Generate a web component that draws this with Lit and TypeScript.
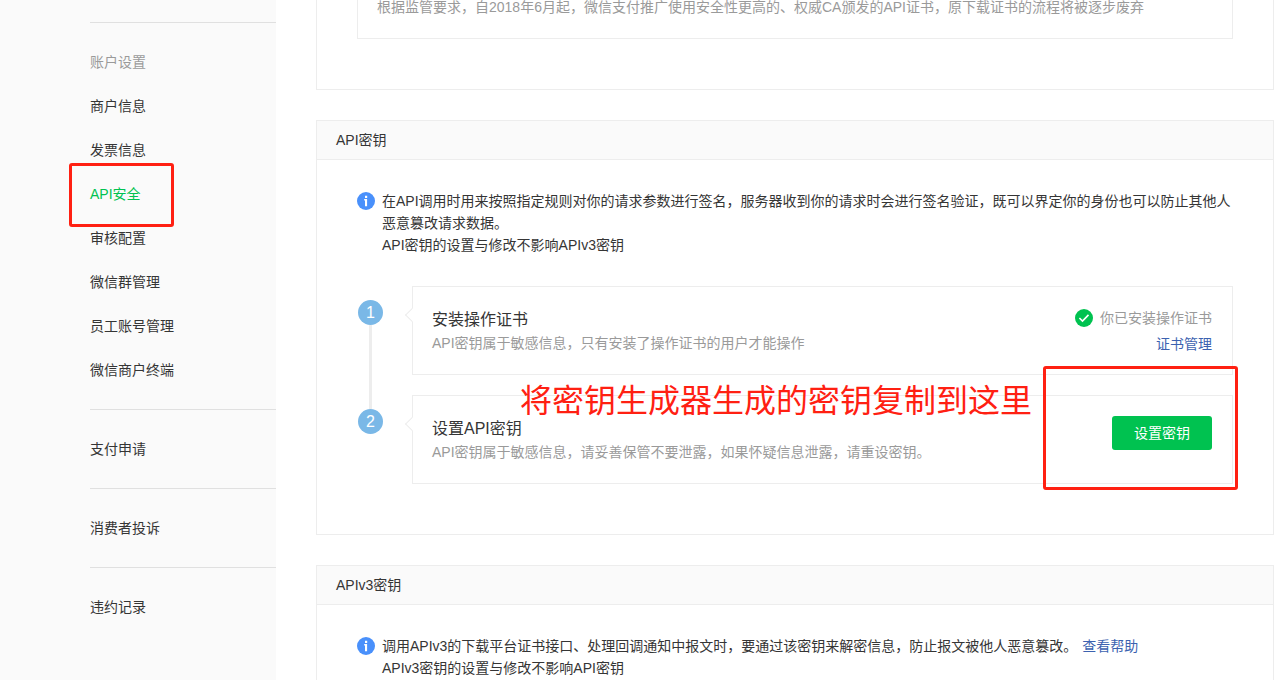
import { LitElement, html, css, svg, nothing } from "lit";
import { customElement, property } from "lit/decorators.js";

const fontStack = css`"Liberation Sans", "Noto Sans CJK SC", sans-serif`;

const infoIcon = html`<svg class="icon" viewBox="0 0 18 18" width="18" height="18" aria-hidden="true">
  <circle cx="9" cy="9" r="9" fill="#4990fb"></circle>
  ${svg`<path d="M8 3.8h2.2v2.2H8zM7.2 7H10.1V14.2H8V8.4H7.2z" fill="#fff"></path>`}
</svg>`;

const checkIcon = html`<svg class="icon" viewBox="0 0 18 18" width="18" height="18" aria-hidden="true">
  <circle cx="9" cy="9" r="9" fill="#00c250"></circle>
  ${svg`<path d="M4.4 9l3.1 3.1 6-6.2" fill="none" stroke="#fff" stroke-width="1.6"></path>`}
</svg>`;

interface MenuGroup {
  title?: string;
  items: string[];
}

const menu: MenuGroup[] = [
  {
    title: "账户设置",
    items: ["商户信息", "发票信息", "API安全", "审核配置", "微信群管理", "员工账号管理", "微信商户终端"],
  },
  { items: ["支付申请"] },
  { items: ["消费者投诉"] },
  { items: ["违约记录"] },
];

@customElement("side-menu")
export class SideMenu extends LitElement {
  @property() active = "";

  static styles = css`
    :host {
      display: block;
      box-sizing: border-box;
      padding: 22px 0 0 90px;
      background: #fafafa;
    }
    .group {
      margin: 0;
      padding: 17px 0;
      border-top: 1px solid #e0e0e0;
      list-style: none;
      font-size: 14px;
      line-height: 44px;
    }
    .title {
      color: #9a9a9a;
    }
    .item {
      position: relative;
    }
    .link {
      color: #353535;
      text-decoration: none;
    }
    .current {
      color: #00c250;
    }
    .mark {
      position: absolute;
      left: -21px;
      top: -9px;
      box-sizing: border-box;
      width: 105px;
      height: 64px;
      border: 3px solid #ff2012;
      border-radius: 3px;
      pointer-events: none;
      z-index: 1;
    }
  `;

  render() {
    return html`<nav>
      ${menu.map(
        (group) => html`<ul class="group">
          ${group.title ? html`<li class="title">${group.title}</li>` : nothing}
          ${group.items.map(
            (name) => html`<li class="item">
              <a class="link ${name === this.active ? "current" : ""}" href="#">${name}</a>
              ${name === this.active ? html`<span class="mark"></span>` : nothing}
            </li>`
          )}
        </ul>`
      )}
    </nav>`;
  }
}

@customElement("app-root")
export class AppRoot extends LitElement {
  static styles = css`
    :host {
      display: grid;
      grid-template-columns: 276px minmax(0, 1fr);
      height: 100vh;
      overflow: hidden;
      background: #fff;
      color: #353535;
      font-family: ${fontStack};
      font-size: 14px;
      line-height: 22px;
    }
    .main {
      display: flex;
      flex-direction: column;
      gap: 30px;
      margin: -4px 3px 0 40px;
    }
    .panel {
      border: 1px solid #ededed;
    }
    .panel.continued {
      border-top: 0;
    }
    .heading {
      margin: 0;
      padding: 0 19px;
      border-bottom: 1px solid #ededed;
      background: #fafafa;
      font-size: 14px;
      font-weight: 400;
      line-height: 38px;
    }
    .body {
      padding: 30px 40px 50px;
    }
    .continued .body {
      padding-top: 0;
    }
    .notice {
      margin: 0;
      padding: 0 19px 20px;
      border: 1px solid #ededed;
      border-top: 0;
      color: #9a9a9a;
    }
    .icon {
      display: block;
      flex: none;
    }
    .info {
      display: flex;
      gap: 7px;
    }
    .info .icon {
      margin-top: 2px;
    }
    .info p {
      margin: 0;
    }
    .link {
      color: #3c62b0;
      text-decoration: none;
    }
    .help {
      margin-left: 5px;
    }
    .steps {
      display: flex;
      flex-direction: column;
      gap: 20px;
      margin: 30px 0 0;
      padding: 0;
      list-style: none;
    }
    .step {
      position: relative;
      display: grid;
      grid-template-columns: 26px minmax(0, 1fr);
      column-gap: 29px;
    }
    .rail {
      position: relative;
      padding: 14px 0 0 1px;
    }
    .number {
      display: block;
      width: 25px;
      height: 25px;
      border-radius: 50%;
      background: #7ab8e7;
      color: #fff;
      font-size: 16px;
      line-height: 25px;
      text-align: center;
    }
    .step:not(:last-child) .rail::after {
      content: "";
      position: absolute;
      left: 12px;
      top: 39px;
      bottom: -34px;
      width: 3px;
      background: #ededed;
    }
    .card {
      position: relative;
      display: flex;
      align-items: flex-start;
      justify-content: space-between;
      padding: 20px 20px 19px 19px;
      border: 1px solid #ededed;
    }
    .card::before {
      content: "";
      position: absolute;
      left: -6px;
      top: 23px;
      width: 9px;
      height: 9px;
      border: solid #ededed;
      border-width: 0 0 1px 1px;
      background: #fff;
      transform: rotate(45deg);
    }
    .name {
      margin: 0;
      font-size: 16px;
      font-weight: 400;
      line-height: 25px;
    }
    .desc {
      margin: 0;
      color: #9a9a9a;
      line-height: 23px;
    }
    .state {
      display: flex;
      flex-direction: column;
      align-items: flex-end;
      gap: 4px;
    }
    .status {
      display: flex;
      align-items: center;
      gap: 7px;
      color: #9a9a9a;
    }
    .button {
      width: 100px;
      height: 34px;
      padding: 0;
      border: 0;
      border-radius: 3px;
      background: #00c250;
      color: #fff;
      font: inherit;
      cursor: pointer;
    }
    .mark {
      position: absolute;
      right: -5px;
      top: -29px;
      box-sizing: border-box;
      width: 195px;
      height: 124px;
      border: 3px solid #ff2012;
      border-radius: 3px;
      pointer-events: none;
    }
    .callout {
      position: absolute;
      right: 201px;
      top: -14px;
      color: #ff2012;
      font-size: 32px;
      line-height: 40px;
      white-space: nowrap;
      pointer-events: none;
    }
  `;

  render() {
    return html`
      <side-menu active="API安全"></side-menu>
      <main class="main">
        <section class="panel continued">
          <div class="body">
            <p class="notice">
              根据监管要求，自2018年6月起，微信支付推广使用安全性更高的、权威CA颁发的API证书，原下载证书的流程将被逐步废弃
            </p>
          </div>
        </section>

        <section class="panel">
          <h2 class="heading">API密钥</h2>
          <div class="body">
            <div class="info">
              ${infoIcon}
              <div>
                <p>
                  在API调用时用来按照指定规则对你的请求参数进行签名，服务器收到你的请求时会进行签名验证，既可以界定你的身份也可以防止其他人恶意篡改请求数据。
                </p>
                <p>API密钥的设置与修改不影响APIv3密钥</p>
              </div>
            </div>
            <ol class="steps">
              <li class="step">
                <div class="rail"><span class="number">1</span></div>
                <div class="card">
                  <div>
                    <h3 class="name">安装操作证书</h3>
                    <p class="desc">API密钥属于敏感信息，只有安装了操作证书的用户才能操作</p>
                  </div>
                  <div class="state">
                    <span class="status">${checkIcon}你已安装操作证书</span>
                    <a class="link" href="#">证书管理</a>
                  </div>
                </div>
              </li>
              <li class="step">
                <div class="rail"><span class="number">2</span></div>
                <div class="card">
                  <div>
                    <h3 class="name">设置API密钥</h3>
                    <p class="desc">API密钥属于敏感信息，请妥善保管不要泄露，如果怀疑信息泄露，请重设密钥。</p>
                  </div>
                  <button class="button" type="button">设置密钥</button>
                </div>
                <span class="callout">将密钥生成器生成的密钥复制到这里</span>
                <span class="mark"></span>
              </li>
            </ol>
          </div>
        </section>

        <section class="panel">
          <h2 class="heading">APIv3密钥</h2>
          <div class="body">
            <div class="info">
              ${infoIcon}
              <div>
                <p>
                  调用APIv3的下载平台证书接口、处理回调通知中报文时，要通过该密钥来解密信息，防止报文被他人恶意篡改。<a
                    class="link help"
                    href="#"
                    >查看帮助</a
                  >
                </p>
                <p>APIv3密钥的设置与修改不影响API密钥</p>
              </div>
            </div>
          </div>
        </section>
      </main>
    `;
  }
}
